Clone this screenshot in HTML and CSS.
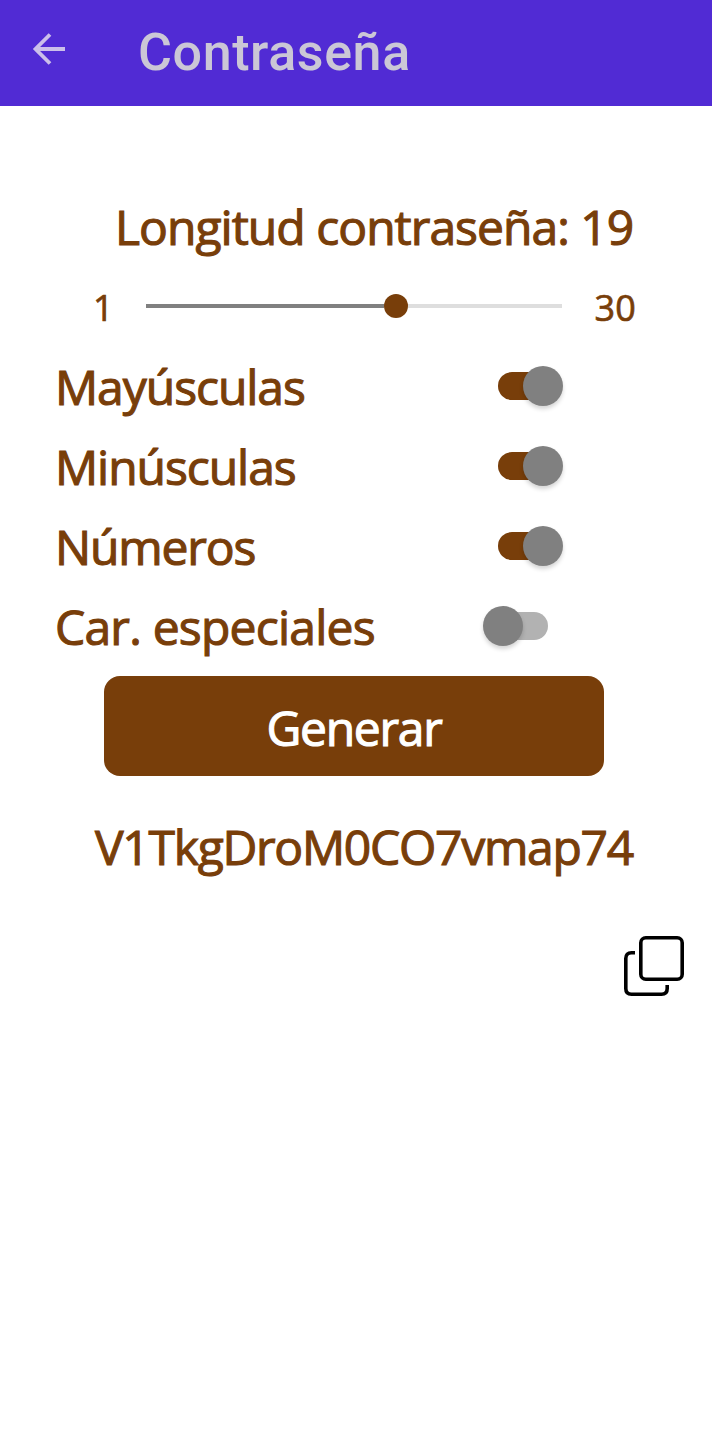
FILE: index.html
```html
<!DOCTYPE html>
<html lang="es">
<head>
<meta charset="utf-8">
<title>Contraseña</title>
<link rel="stylesheet" href="styles.css">
</head>
<body>
<header class="app-bar">
  <svg class="back" width="34" height="34" viewBox="0 0 34 34" fill="none" stroke="currentColor" stroke-width="3.800"><path d="M33 17H4M18 2.500L3.500 17L18 31.500"/></svg>
  <h1 class="app-title">Contraseña</h1>
</header>
<main class="content">
  <div class="length text">Longitud contraseña: 19</div>
  <div class="slider-row">
    <span class="limit text">1</span>
    <div class="slider"><div class="fill"></div><div class="thumb"></div><div class="rest"></div></div>
    <span class="limit text">30</span>
  </div>
  <div class="option"><span class="text">Mayúsculas</span><div class="switch on"><div class="knob"></div></div></div>
  <div class="option"><span class="text">Minúsculas</span><div class="switch on"><div class="knob"></div></div></div>
  <div class="option"><span class="text numbers">Números</span><div class="switch on"><div class="knob"></div></div></div>
  <div class="option"><span class="text special">Car. especiales</span><div class="switch"><div class="knob"></div></div></div>
  <button class="generate text">Generar</button>
  <div class="password text">V1TkgDroM0CO7vmap74</div>
  <svg class="copy" width="60" height="60" viewBox="0 0 60 60" fill="none" stroke="#000" stroke-width="3.600"><rect x="16.800" y="1.800" width="41.400" height="41.400" rx="5"/><path d="M11 16.800H7.500Q1.800 16.800 1.800 22.500V52.500Q1.800 58.200 7.500 58.200H37.500Q43.200 58.200 43.200 52.500V49"/></svg>
</main>
</body>
</html>
```
FILE: styles.css
```css
* { box-sizing: border-box; }
body {
  margin: 0;
  min-height: 1434px;
  background: #fff;
  font-family: "Open Sans", sans-serif;
}
.app-bar {
  display: flex;
  align-items: center;
  height: 106px;
  padding: 0 32px;
  background: #512bd4;
  color: #cbc7d6;
}
.back {
  margin: -8px 72px 0 0;
  color: #cbbfea;
}
.app-title {
  margin: 0;
  font: 500 52px/60px Roboto, sans-serif;
  letter-spacing: 0.6px;
}
.content {
  display: flex;
  flex-direction: column;
  padding-top: 80px;
}
.text {
  height: 80px;
  color: #783e0a;
  font-size: 48px;
  line-height: 82px;
  letter-spacing: -1.05px;
  white-space: nowrap;
  -webkit-text-stroke: 1.1px currentColor;
}
.length {
  padding-left: 115px;
  letter-spacing: -0.97px;
}
.slider-row {
  display: flex;
  align-items: center;
  height: 80px;
  padding-left: 93px;
}
.limit {
  font-size: 36px;
  line-height: 83px;
  letter-spacing: 0;
  -webkit-text-stroke-width: 0.7px;
}
.slider {
  display: flex;
  align-items: center;
  width: 416px;
  margin: 0 33px 0 32px;
}
.fill {
  width: 238px;
  height: 4px;
  background: #808080;
}
.thumb {
  width: 24px;
  height: 24px;
  border-radius: 50%;
  background: #783e0a;
}
.rest {
  flex: 1;
  height: 4px;
  background: #dedede;
}
.option {
  display: flex;
  align-items: center;
  justify-content: space-between;
  height: 80px;
  padding: 0 149px 0 55px;
}
.numbers { letter-spacing: -1.15px; }
.special { letter-spacing: -0.78px; }
.switch {
  position: relative;
  display: flex;
  align-items: center;
  width: 80px;
  height: 40px;
}
.switch::before {
  content: "";
  width: 50px;
  height: 28px;
  margin-left: 15px;
  border-radius: 14px;
  background: #b2b2b2;
}
.switch.on::before { background: #783e0a; }
.knob {
  position: absolute;
  left: 0;
  width: 40px;
  height: 40px;
  border-radius: 50%;
  background: #808080;
  box-shadow: 0 3px 4px rgba(0, 0, 0, 0.17);
}
.switch.on .knob { left: 40px; }
.generate {
  width: 500px;
  height: 100px;
  margin: 10px 0 30px 104px;
  padding: 3px 0 0;
  border: 0;
  border-radius: 16px;
  background: #783e0a;
  color: #fff;
  font-family: inherit;
  letter-spacing: -1.3px;
}
.password {
  padding-left: 95px;
  letter-spacing: -1.27px;
}
.copy { margin: 50px 0 0 624px; }
```
